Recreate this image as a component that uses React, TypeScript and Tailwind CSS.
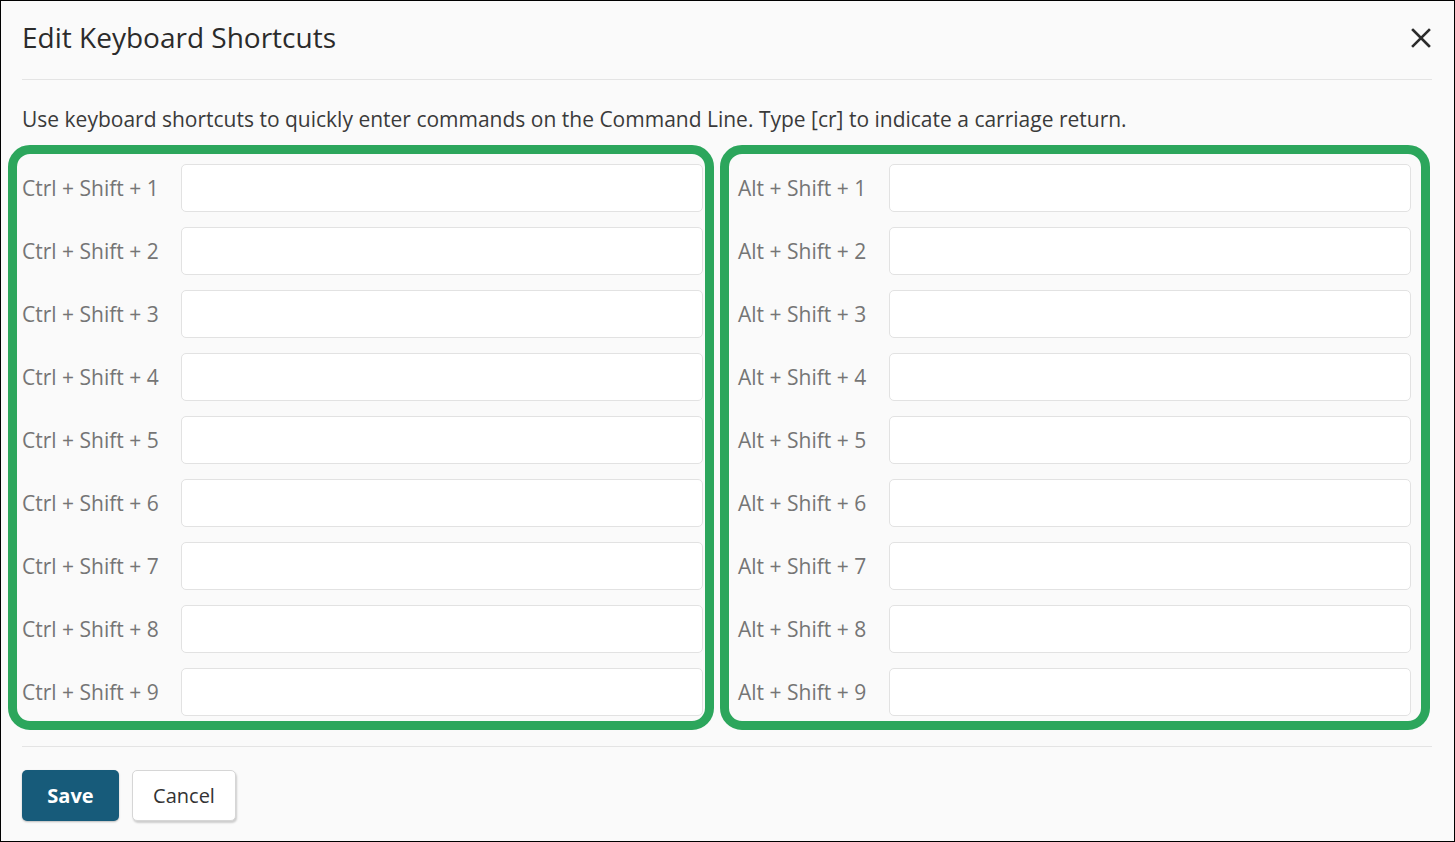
const rows = [1, 2, 3, 4, 5, 6, 7, 8, 9];

function ShortcutRow({ label, labelWidth }: { label: string; labelWidth: string }) {
  return (
    <div className="flex items-center h-[48px]">
      <label className={`${labelWidth} shrink-0 text-[21px] leading-none text-[#757575] whitespace-nowrap`}>{label}</label>
      <input
        type="text"
        className="flex-1 h-[48px] bg-white border border-[#e2e2e2] rounded-[5px] px-3 text-[20px] outline-none"
      />
    </div>
  );
}

export default function App() {
  return (
    <div
      className="w-[1455px] h-[842px] border border-black bg-[#fafafa] text-[#333]"
      style={{ fontFamily: '"Open Sans", "Noto Sans", sans-serif' }}
    >
      <div className="px-[21px]">
        <div className="h-[79px] flex items-center justify-between border-b border-[#e4e4e4] pb-[6px] mr-[1px]">
          <h1 className="text-[28px] text-[#2b2b2b] leading-none">Edit Keyboard Shortcuts</h1>
          <button className="w-[24px] h-[24px] flex items-center justify-center text-[#2b2b2b] mr-[-1px] mt-[2px]">
            <svg width="22" height="22" viewBox="0 0 22 22" fill="none" stroke="currentColor" strokeWidth="2.6" strokeLinecap="square">
              <path d="M3 3L19 19M19 3L3 19" />
            </svg>
          </button>
        </div>

        <p className="mt-[25px] text-[21px] leading-[28px] text-[#3a3a3a]">
          Use keyboard shortcuts to quickly enter commands on the Command Line. Type [cr] to indicate a carriage return.
        </p>

        <div className="mt-[12px] ml-[-14px] flex gap-[6px]">
          <div className="w-[706px] border-[9px] border-[#2ca65c] rounded-[22px] pt-[10px] pb-[5px] pl-[5px] pr-[2px] flex flex-col gap-[15px]">
            {rows.map((n) => (
              <ShortcutRow key={n} label={`Ctrl + Shift + ${n}`} labelWidth="w-[159px]" />
            ))}
          </div>
          <div className="w-[710px] border-[9px] border-[#2ca65c] rounded-[22px] pt-[10px] pb-[5px] pl-[9px] pr-[10px] flex flex-col gap-[15px]">
            {rows.map((n) => (
              <ShortcutRow key={n} label={`Alt + Shift + ${n}`} labelWidth="w-[151px]" />
            ))}
          </div>
        </div>

        <div className="mt-[16px] border-t border-[#e4e4e4] mr-[1px]" />

        <div className="mt-[23px] flex gap-[13px]">
          <button className="w-[97px] h-[51px] rounded-[5px] bg-[#175b7a] text-white text-[20px] font-bold shadow-[0_1px_2px_rgba(0,0,0,0.25)]">
            Save
          </button>
          <button className="w-[104px] h-[51px] rounded-[5px] bg-white border border-[#d6d6d6] text-[#333] text-[20px] shadow-[1px_2px_2px_rgba(0,0,0,0.18)]">
            Cancel
          </button>
        </div>
      </div>
    </div>
  );
}
